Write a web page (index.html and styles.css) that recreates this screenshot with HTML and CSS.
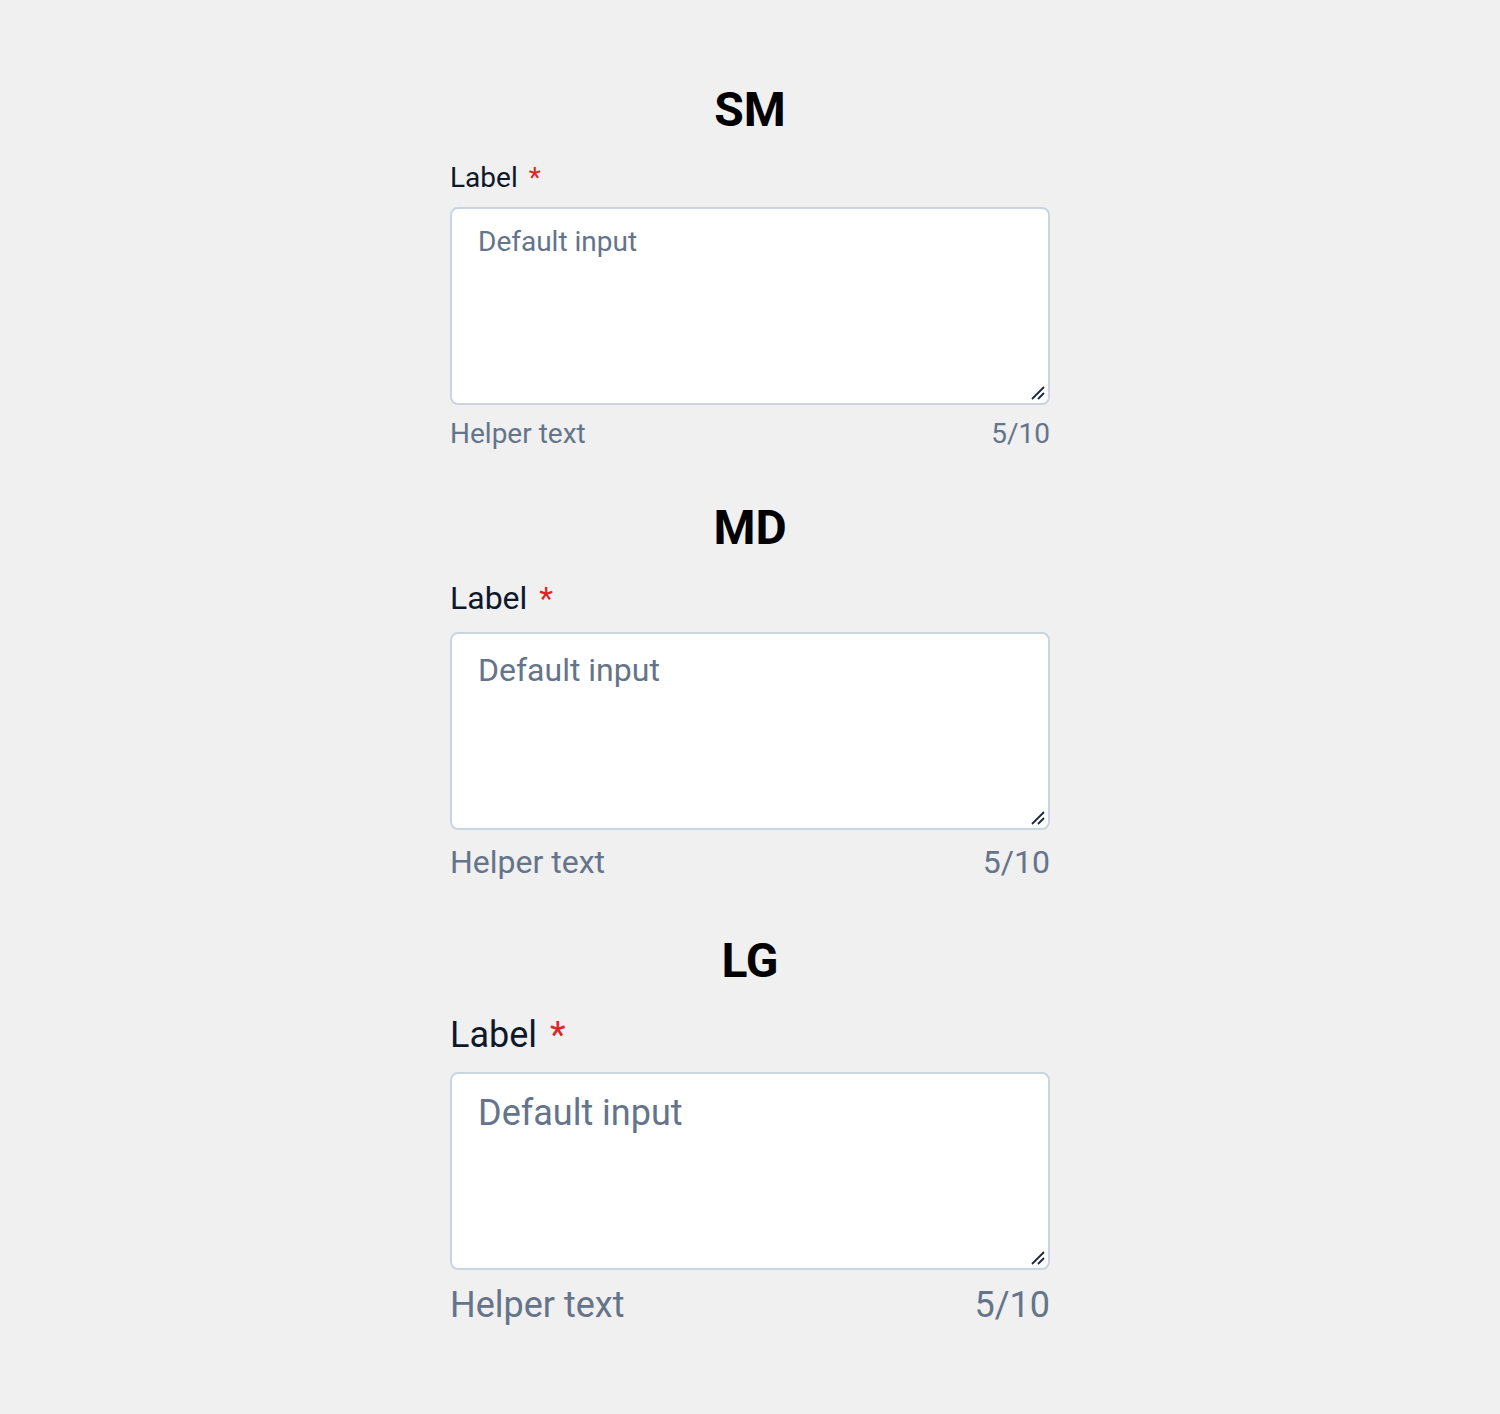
FILE: index.html
```html
<!DOCTYPE html>
<html lang="en">
<head>
    <meta charset="UTF-8">
    <meta name="viewport" content="width=device-width, initial-scale=1.0">
    <title>Textarea sizes</title>
    <link rel="stylesheet" href="styles.css">
</head>
<body>
    <div class="page">
        <div class="size-block sm">
            <h2>SM</h2>
            <label class="field-label" for="ta-sm">Label <span class="required">*</span></label>
            <div class="field-wrap">
                <textarea id="ta-sm" class="field-input" placeholder="Default input"></textarea>
                <svg class="grip" width="16" height="16" viewBox="0 0 16 16"><path d="M2 14L14 2M8 14L14 8"/></svg>
            </div>
            <div class="field-footer">
                <span>Helper text</span>
                <span>5/10</span>
            </div>
        </div>

        <div class="size-block md">
            <h2>MD</h2>
            <label class="field-label" for="ta-md">Label <span class="required">*</span></label>
            <div class="field-wrap">
                <textarea id="ta-md" class="field-input" placeholder="Default input"></textarea>
                <svg class="grip" width="16" height="16" viewBox="0 0 16 16"><path d="M2 14L14 2M8 14L14 8"/></svg>
            </div>
            <div class="field-footer">
                <span>Helper text</span>
                <span>5/10</span>
            </div>
        </div>

        <div class="size-block lg">
            <h2>LG</h2>
            <label class="field-label" for="ta-lg">Label <span class="required">*</span></label>
            <div class="field-wrap">
                <textarea id="ta-lg" class="field-input" placeholder="Default input"></textarea>
                <svg class="grip" width="16" height="16" viewBox="0 0 16 16"><path d="M2 14L14 2M8 14L14 8"/></svg>
            </div>
            <div class="field-footer">
                <span>Helper text</span>
                <span>5/10</span>
            </div>
        </div>
    </div>
</body>
</html>
```
FILE: styles.css
```css
:root {
    --bg: #f0f0f0;
    --text: #0f172a;
    --muted: #64748b;
    --border: #cbd5e1;
    --danger: #dc2626;
}

body {
    margin: 0;
    background-color: var(--bg);
    font-family: Roboto, "Liberation Sans", sans-serif;
}

.page {
    width: 600px;
    margin: 0 auto;
    padding: 81px 0 40px;
}

.size-block {
    display: flex;
    flex-direction: column;
    margin-bottom: 44px;
}

.size-block.md {
    margin-bottom: 46px;
}

.size-block h2 {
    margin: 0 0 18px;
    font-size: 48px;
    line-height: 1.2;
    font-weight: 700;
    text-align: center;
    color: #000;
}

.field-label {
    color: var(--text);
    line-height: 1.5;
    margin-bottom: 8px;
}

.required {
    color: var(--danger);
    margin-left: 4px;
}

.field-wrap {
    position: relative;
    display: flex;
}

.field-input {
    flex: 1;
    height: 198px;
    box-sizing: border-box;
    margin: 0;
    padding: 12px 26px;
    border: 2px solid var(--border);
    border-radius: 8px;
    background: #fff;
    font-family: inherit;
    line-height: 1.5;
    color: var(--text);
    resize: none;
}

.field-input::placeholder {
    color: var(--muted);
}

.grip {
    position: absolute;
    right: 4px;
    bottom: 4px;
    pointer-events: none;
    stroke: #1e293b;
    stroke-width: 1.8;
    fill: none;
}

.field-footer {
    display: flex;
    justify-content: space-between;
    margin-top: 8px;
    line-height: 1.5;
    color: var(--muted);
}

.sm .field-label,
.sm .field-input,
.sm .field-footer {
    font-size: 28px;
}

.md .field-label,
.md .field-input,
.md .field-footer {
    font-size: 32px;
}

.lg .field-label,
.lg .field-input,
.lg .field-footer {
    font-size: 36px;
}

.md .field-label,
.lg .field-label {
    margin-bottom: 10px;
}
```
